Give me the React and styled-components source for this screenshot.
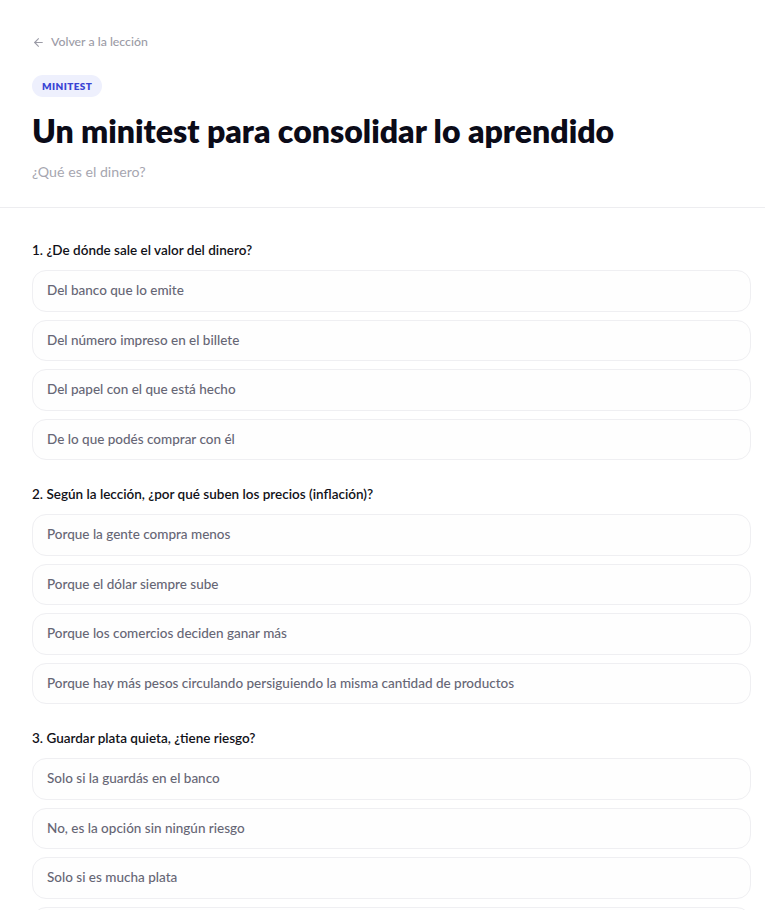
import React from 'react';
import styled, { createGlobalStyle } from 'styled-components';

const GlobalStyle = createGlobalStyle`
  * { box-sizing: border-box; }
  body {
    margin: 0;
    background: #ffffff;
    font-family: Lato, "Noto Sans", sans-serif;
    color: #0c0c1a;
  }
`;

const Page = styled.main`
  display: flex;
  flex-direction: column;
`;

const Header = styled.header`
  display: flex;
  flex-direction: column;
  align-items: flex-start;
  padding: 33px 14px 25px 32px;
  border-bottom: 1px solid #ededf0;
`;

const BackLink = styled.a`
  display: flex;
  align-items: center;
  gap: 6px;
  font-size: 12.3px;
  font-weight: 500;
  color: #9b9ba6;
  text-decoration: none;
  line-height: 18px;
`;

const Badge = styled.span`
  margin-top: 24px;
  padding: 0 10px;
  height: 22px;
  display: inline-flex;
  align-items: center;
  border-radius: 11px;
  background: #eef0fd;
  color: #3a45d4;
  font-size: 10px;
  font-weight: 800;
  letter-spacing: 0.4px;
`;

const Title = styled.h1`
  margin: 14px 0 0;
  font-size: 32px;
  font-weight: 800;
  line-height: 40px;
  color: #0b0b18;
`;

const Subtitle = styled.p`
  margin: 11px 0 0;
  font-size: 14.2px;
  line-height: 20px;
  color: #a6a6b0;
`;

const Quiz = styled.section`
  display: flex;
  flex-direction: column;
  gap: 24px;
  padding: 32px 14px 40px 32px;
`;

const Question = styled.div`
  display: flex;
  flex-direction: column;
`;

const QuestionLabel = styled.h2`
  margin: 0 0 10px;
  font-size: 13.5px;
  font-weight: 600;
  line-height: 20px;
  color: #111118;
`;

const Options = styled.div`
  display: flex;
  flex-direction: column;
  gap: 8px;
`;

const Option = styled.button`
  display: block;
  width: 100%;
  text-align: left;
  padding: 10px 14px;
  border: 1px solid #efeff2;
  border-radius: 14px;
  background: #fefefe;
  font-family: inherit;
  font-size: 13.5px;
  font-weight: 500;
  line-height: 19.5px;
  color: #666675;
  cursor: pointer;
`;

const ArrowLeft = () => (
  <svg width="13" height="13" viewBox="0 0 24 24" fill="none" stroke="currentColor" strokeWidth="2" strokeLinecap="round" strokeLinejoin="round">
    <path d="M19 12H5" />
    <path d="M12 19l-7-7 7-7" />
  </svg>
);

const questions = [
  {
    text: '¿De dónde sale el valor del dinero?',
    options: [
      'Del banco que lo emite',
      'Del número impreso en el billete',
      'Del papel con el que está hecho',
      'De lo que podés comprar con él',
    ],
  },
  {
    text: 'Según la lección, ¿por qué suben los precios (inflación)?',
    options: [
      'Porque la gente compra menos',
      'Porque el dólar siempre sube',
      'Porque los comercios deciden ganar más',
      'Porque hay más pesos circulando persiguiendo la misma cantidad de productos',
    ],
  },
  {
    text: 'Guardar plata quieta, ¿tiene riesgo?',
    options: [
      'Solo si la guardás en el banco',
      'No, es la opción sin ningún riesgo',
      'Solo si es mucha plata',
      'Sí, porque la inflación le quita valor con el tiempo',
    ],
  },
];

export default function App() {
  return (
    <Page>
      <GlobalStyle />
      <Header>
        <BackLink href="#">
          <ArrowLeft />
          Volver a la lección
        </BackLink>
        <Badge>MINITEST</Badge>
        <Title>Un minitest para consolidar lo aprendido</Title>
        <Subtitle>¿Qué es el dinero?</Subtitle>
      </Header>
      <Quiz>
        {questions.map((q, i) => (
          <Question key={i}>
            <QuestionLabel>
              {i + 1}. {q.text}
            </QuestionLabel>
            <Options>
              {q.options.map((o, j) => (
                <Option key={j}>{o}</Option>
              ))}
            </Options>
          </Question>
        ))}
      </Quiz>
    </Page>
  );
}
